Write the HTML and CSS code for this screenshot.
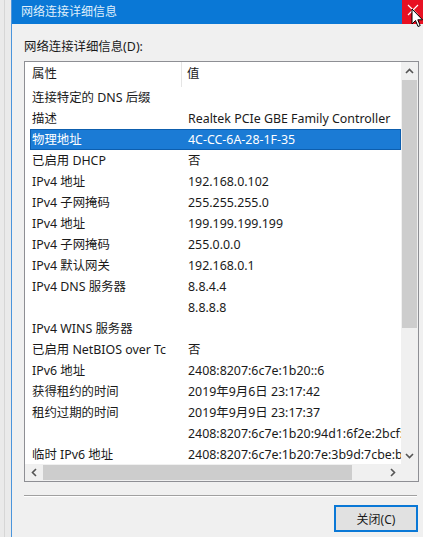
FILE: index.html
```html
<!DOCTYPE html>
<html lang="zh-CN">
<head>
<meta charset="utf-8">
<title>网络连接详细信息</title>
<link rel="stylesheet" href="styles.css">
</head>
<body>
<div class="screen">
  <div class="desk"><div class="desk-line"></div></div>
  <div class="window">
    <div class="titlebar">
      <span class="title">网络连接详细信息</span>
      <div class="close">
        <svg width="12" height="12" viewBox="0 0 12 12"><path d="M1 1 L11 11 M11 1 L1 11" stroke="#fff" stroke-width="1.2" fill="none"/></svg>
      </div>
      <svg class="cursor" width="13" height="20" viewBox="0 0 13 20"><path d="M1 1 L1 16 L4.5 12.5 L7 18.5 L9.2 17.6 L6.8 11.8 L11.5 11.8 Z" fill="#fff" stroke="#000" stroke-width="1" stroke-linejoin="round"/></svg>
    </div>
    <div class="client">
      <div class="label">网络连接详细信息(D):</div>
      <div class="listbox">
        <div class="content">
          <div class="header">
            <div class="hcell hcell-prop">属性</div>
            <div class="hcell hcell-val">值</div>
          </div>
          <div class="rows">
            <div class="row"><span class="c1">连接特定的 DNS 后缀</span><span class="c2"></span></div>
            <div class="row"><span class="c1">描述</span><span class="c2">Realtek PCIe GBE Family Controller</span></div>
            <div class="row row-selected"><span class="c1">物理地址</span><span class="c2">4C-CC-6A-28-1F-35</span></div>
            <div class="row"><span class="c1">已启用 DHCP</span><span class="c2">否</span></div>
            <div class="row"><span class="c1">IPv4 地址</span><span class="c2">192.168.0.102</span></div>
            <div class="row"><span class="c1">IPv4 子网掩码</span><span class="c2">255.255.255.0</span></div>
            <div class="row"><span class="c1">IPv4 地址</span><span class="c2">199.199.199.199</span></div>
            <div class="row"><span class="c1">IPv4 子网掩码</span><span class="c2">255.0.0.0</span></div>
            <div class="row"><span class="c1">IPv4 默认网关</span><span class="c2">192.168.0.1</span></div>
            <div class="row"><span class="c1">IPv4 DNS 服务器</span><span class="c2">8.8.4.4</span></div>
            <div class="row"><span class="c1"></span><span class="c2">8.8.8.8</span></div>
            <div class="row"><span class="c1">IPv4 WINS 服务器</span><span class="c2"></span></div>
            <div class="row"><span class="c1">已启用 NetBIOS over Tc</span><span class="c2">否</span></div>
            <div class="row"><span class="c1">IPv6 地址</span><span class="c2">2408:8207:6c7e:1b20::6</span></div>
            <div class="row"><span class="c1">获得租约的时间</span><span class="c2">2019年9月6日 23:17:42</span></div>
            <div class="row"><span class="c1">租约过期的时间</span><span class="c2">2019年9月9日 23:17:37</span></div>
            <div class="row"><span class="c1"></span><span class="c2">2408:8207:6c7e:1b20:94d1:6f2e:2bcf:</span></div>
            <div class="row"><span class="c1">临时 IPv6 地址</span><span class="c2">2408:8207:6c7e:1b20:7e:3b9d:7cbe:b</span></div>
          </div>
        </div>
        <div class="vscroll">
          <div class="sbtn"><svg width="9" height="6" viewBox="0 0 9 6"><path d="M1 5 L4.5 1.5 L8 5" stroke="#555" stroke-width="1.6" fill="none"/></svg></div>
          <div class="vtrack"><div class="vthumb"></div></div>
          <div class="sbtn"><svg width="9" height="6" viewBox="0 0 9 6"><path d="M1 1 L4.5 4.5 L8 1" stroke="#555" stroke-width="1.6" fill="none"/></svg></div>
        </div>
        <div class="hscroll">
          <div class="sbtn"><svg width="6" height="9" viewBox="0 0 6 9"><path d="M5 1 L1.5 4.5 L5 8" stroke="#555" stroke-width="1.6" fill="none"/></svg></div>
          <div class="htrack"><div class="hthumb"></div></div>
          <div class="sbtn"><svg width="6" height="9" viewBox="0 0 6 9"><path d="M1 1 L4.5 4.5 L1 8" stroke="#555" stroke-width="1.6" fill="none"/></svg></div>
        </div>
        <div class="corner"></div>
      </div>
      <div class="sep"></div>
      <div class="buttons">
        <button class="btn">关闭(C)</button>
      </div>
    </div>
  </div>
</div>
</body>
</html>
```

FILE: styles.css
```css
* { box-sizing: border-box; }

html, body {
  margin: 0;
  padding: 0;
  width: 423px;
  height: 537px;
  overflow: hidden;
  font-family: "Noto Sans", "Noto Sans CJK SC", sans-serif;
  font-size: 12.4px;
  color: #1a1a1a;
}

.screen {
  display: flex;
  width: 423px;
  height: 537px;
}

.desk {
  width: 11px;
  background: #eaeaea;
  display: flex;
  padding-left: 4px;
}

.desk-line {
  width: 1px;
  background: #d6d6d6;
}

.window {
  flex: 1;
  display: flex;
  flex-direction: column;
  border-left: 1px solid #4b95dc;
  background: #f0f0f0;
}

.titlebar {
  position: relative;
  height: 24px;
  background: #0a78d6;
  display: flex;
  align-items: center;
  padding-left: 9px;
}

.title {
  color: #dfeefb;
  font-size: 12px;
  line-height: 16px;
  flex: 1;
}

.close {
  width: 21px;
  height: 24px;
  background: #e81123;
  display: flex;
  align-items: center;
  justify-content: center;
  padding-bottom: 4px;
}

.cursor {
  position: absolute;
  left: 399px;
  top: 8px;
}

.client {
  flex: 1;
  display: flex;
  flex-direction: column;
  padding: 15px 4px 0 12px;
}

.label {
  line-height: 16px;
  height: 16px;
  margin-bottom: 6px;
}

.listbox {
  width: 395px;
  height: 421px;
  border: 1px solid #8e8f94;
  background: #fff;
  display: grid;
  grid-template-columns: 1fr 17px;
  grid-template-rows: 1fr 17px;
}

.content {
  overflow: hidden;
  white-space: nowrap;
}

.header {
  display: flex;
  height: 25px;
  line-height: 24px;
}

.hcell-prop {
  width: 157px;
  padding-left: 7px;
  border-right: 1px solid #e5e5e5;
}

.hcell-val {
  padding-left: 5px;
}

.rows {
  padding-left: 5px;
}

.row {
  display: flex;
  height: 21px;
  line-height: 21px;
}

.c1 {
  width: 152px;
  flex: none;
  padding-left: 2px;
}

.c2 {
  padding-left: 6px;
  flex: none;
}

.row-selected {
  background: #1b7bd5;
  color: #fff;
  outline: 1px solid #0d5eae;
  outline-offset: -1px;
  width: 371px;
}

.vscroll {
  display: flex;
  flex-direction: column;
  background: #f0f0f0;
}

.hscroll {
  display: flex;
  background: #f0f0f0;
}

.sbtn {
  width: 17px;
  height: 17px;
  flex: none;
  display: flex;
  align-items: center;
  justify-content: center;
}

.vtrack {
  flex: 1;
  padding: 1px 0;
}

.vthumb {
  margin: 0 1px;
  height: 248px;
  background: #cdcdcd;
}

.htrack {
  flex: 1;
  display: flex;
  padding: 0 1px;
}

.hthumb {
  width: 309px;
  margin: 1px 0;
  background: #cdcdcd;
}

.corner {
  background: #f0f0f0;
}

.sep {
  width: 393px;
  height: 2px;
  margin-top: 13px;
  border-top: 1px solid #a0a0a0;
  border-bottom: 1px solid #ffffff;
}

.buttons {
  display: flex;
  justify-content: flex-end;
  padding-right: 1px;
  margin-top: 8px;
}

.btn {
  width: 84px;
  height: 27px;
  font-family: "Noto Sans", "Noto Sans CJK SC", sans-serif;
  font-size: 12px;
  color: #1a1a1a;
  background: #e1e1e1;
  border: 2px solid #0a78d6;
  padding: 0;
}
```
